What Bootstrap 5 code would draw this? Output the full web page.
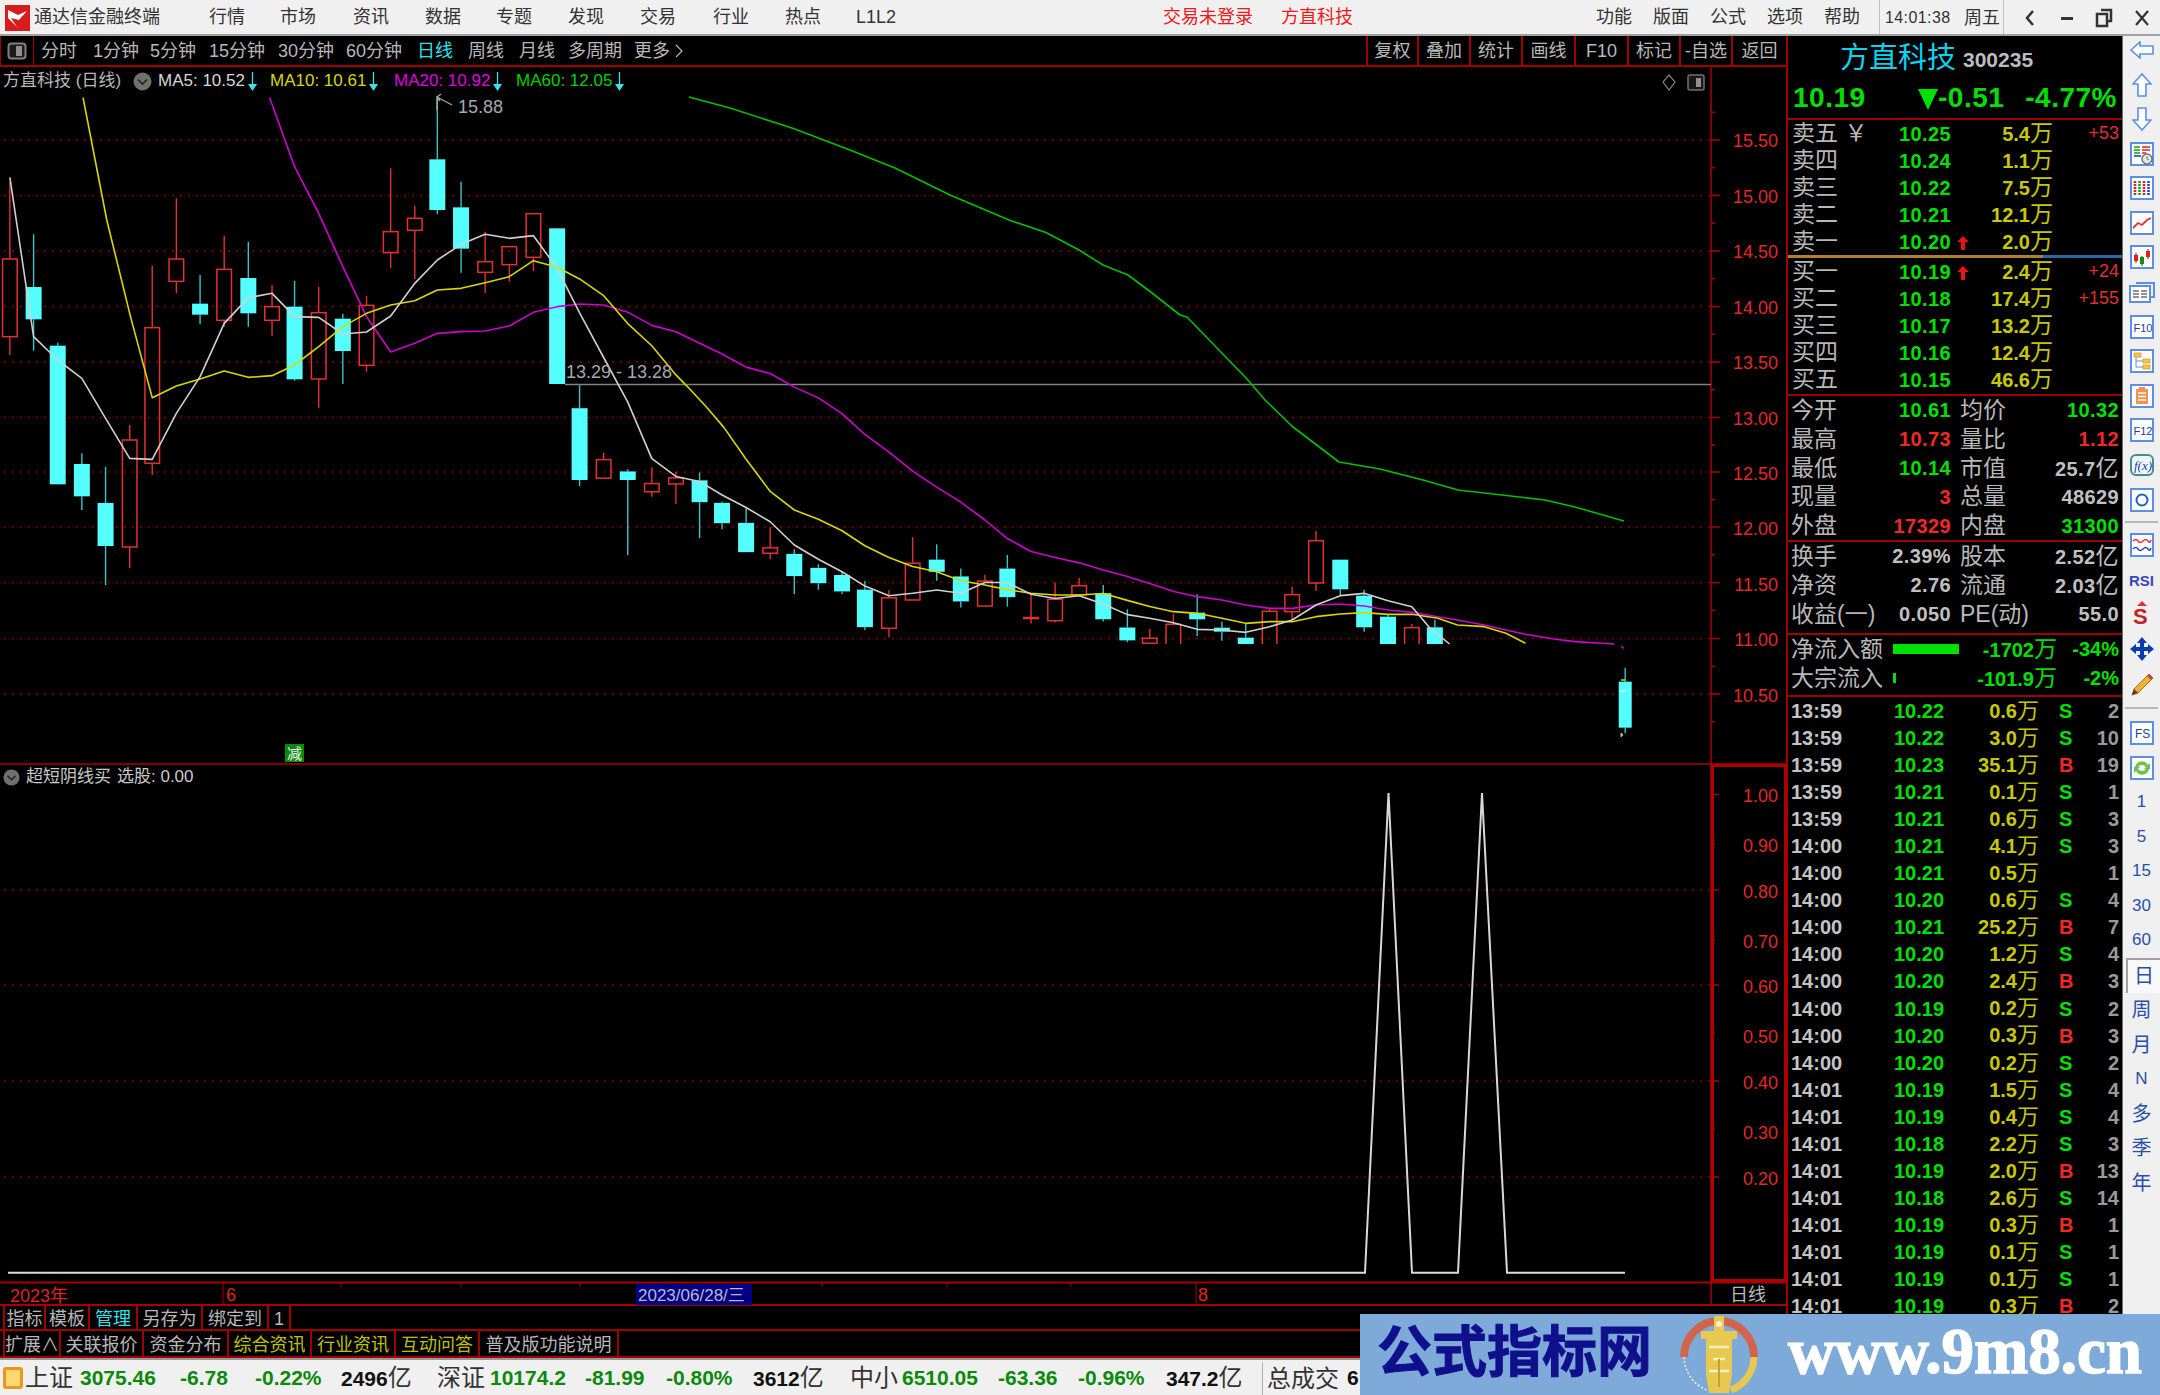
<!doctype html>
<html lang="zh">
<head>
<meta charset="utf-8">
<title>通达信金融终端</title>
<link href="https://cdn.jsdelivr.net/npm/bootstrap@5.3.0/dist/css/bootstrap.min.css" rel="stylesheet">
<style>
html,body{margin:0;background:#000;overflow:hidden}
body{width:2160px;height:1395px;font-family:"Liberation Sans","Noto Sans CJK SC",sans-serif;font-size:18px;line-height:1.1;color:#c0c0c0}
.shell{width:2160px;height:1395px}
i{font-style:normal}
/* title bar */
.titlebar{height:36px;background:#f0f0f0;border-bottom:2px solid #a0a0a0;color:#333;grid-template-columns:34px 175px 71px 73px 72px 71px 72px 72px 73px 72px 71px 307px 118px 315px 57px 57px 57px 57px 55px 85px 40px 7px 38px 36px 38px 37px;align-items:center;font-size:18px;white-space:nowrap}
.titlebar>div{padding-top:2px}
.titlebar .alert-red{color:#f01818}
.titlebar .timecell{border-left:1px solid #c0c0c0;height:34px;padding-left:5px;line-height:32px;font-size:16px;letter-spacing:.4px}
.titlebar .daycell{border-right:1px solid #c0c0c0;height:34px;line-height:32px}
.ctl{display:flex;justify-content:center}
/* toolbar */
.workspace{height:1322px}
.leftcol{width:1786px}
.toolbar{height:31px;border-bottom:2px solid #a00000;grid-template-columns:34px 59px 57px 59px 69px 68px 71px 51px 51px 49px 66px 60px 1fr 51px 52px 52px 53px 53px 52px 52px 55px;align-items:center;white-space:nowrap;color:#b8b8b8}
.toolbar>div{padding-top:2px}
.toolbar .iconcell{height:29px;padding-top:0;border-right:1px solid #a00000;border-left:1px solid #a00000;display:flex;align-items:center;justify-content:center}
.toolbar .first{padding-left:7px}
.toolbar .active-tab{color:#30e0e8}
.toolbar .rbtn{height:29px;padding-top:0;line-height:31px;border-left:2px solid #a00000;text-align:center}
.chartwrap{height:1239px}
.chartwrap svg{display:block}
.chead{left:3px;top:0;height:28px;grid-template-columns:130px 25px 112px 124px 122px 120px;align-items:center;font-size:17px;white-space:nowrap;color:#b8b8b8}
.chead .arrowed{display:flex;align-items:center;gap:3px}
.subhead{left:3px;top:698px;height:24px;font-size:17px;color:#c8c8c8;gap:6px}
.c-w{color:#d8d8d8}.c-y{color:#d8d800}.c-m{color:#e000e0}.c-g{color:#00d000}
.ax{fill:#e02828;font-size:18px;font-family:"Liberation Sans",sans-serif;transform:translateY(1px)}
.lab{fill:#a8a8a8;font-size:18px;font-family:"Liberation Sans",sans-serif}
.dt{font-size:18px;fill:#e02020;font-family:"Liberation Sans","Noto Sans CJK SC",sans-serif}
.tabsa,.tabsb{padding-left:3px;border-bottom:2px solid #a00000;align-items:stretch;white-space:nowrap}
.tabsa{height:25px;grid-template-columns:43px 44px 48px 65px 66px 22px 1fr}
.tabsb{height:27px;grid-template-columns:58px 83px 85px 83px 84px 84px 139px 1fr}
.tabcell{border-right:2px solid #a00000;text-align:center;color:#b8b8b8;font-size:18px;overflow:hidden}
.tabsa .tabcell{line-height:27px}
.tabsb .tabcell{line-height:29px}
.tabcell.none{border:0}
.tabsa .tabcell:first-child,.tabsb .tabcell:first-child{border-left:2px solid #a00000}
.t-cy{color:#30e0e8}.t-ye{color:#c0c000}
.tabsa .t-cy{color:#30e0e8}.tabsb .t-ye{color:#c0c000}
/* quote panel */
.panel{width:337px;border-left:2px solid #a00000;border-right:1px solid #707070;font-size:23px;white-space:nowrap;overflow:hidden}
.hline{height:2px;background:#a00000}
.hl-b{margin-top:1px}
.hl-c{margin-top:4px}
.hl-d{margin-top:2.5px}
.head-name{height:40px;padding-left:52px;padding-top:5px;gap:7px;align-items:center}
.head-name .nm1{font-size:29px;color:#08d4f0}
.head-name .nm2{font-size:21px;font-weight:700;color:#bcbcbc;padding-top:3px}
.head-price{height:42px;grid-template-columns:125px 20px 69px 1fr;padding:2px 5px 0;align-items:center;color:#00e000;font-weight:700;font-size:28px;letter-spacing:.5px}
.num{font-weight:700;font-size:20px;letter-spacing:.4px}
.gr{color:#00e000}.rd{color:#f02828}.gy{color:#c0c0c0}
.bk{height:135px}
.ask{height:27px;grid-template-columns:107px 58px 18px 78px 66px;align-items:center;padding-left:4px}
.lb{color:#b8b8b8;line-height:27px}
.vol{color:#c8c800;text-align:right;font-weight:700;font-size:20px}
.vol i{font-weight:400;font-size:23px}
.ex{color:#e03030;text-align:right;font-size:18px}
.split{height:3px}
.split span:first-child{width:255px;background:#b08030}
.split span:last-child{flex:1;background:#2868a8}
.st{height:28.8px;grid-template-columns:160px 159px;column-gap:9px;padding-left:3px;align-items:center}
.st2{height:29px}
.st>div{display:flex;justify-content:space-between;align-items:center;line-height:28px}
.st .y{font-weight:400;font-size:23px}
.fl{height:29px;grid-template-columns:102px 66px 98px 62px;align-items:center;padding-left:3px;font-size:23px}
.fl .bar{display:block;height:10px;background:#00e000}
.fl .bar.thin{width:3px}
.fl .vv{color:#00e000;text-align:right;font-weight:700;font-size:20px}
.fl .vv i{font-weight:400;font-size:23px}
.tk{height:27.05px;grid-template-columns:103px 66px 79px 41px 39px;padding-left:3px;align-items:center;font-weight:700;font-size:20px}
.tk .tm{color:#c4c4c4}
.tk .nn{color:#9a9a9a;text-align:right}
.tk .fg{padding-left:20px}
.tk .vol i{font-size:22px}
/* side bar */
.sidebar{width:37px;background:#f0f0f0;color:#2850a8;font-size:17px}
.sit{height:34.6px;display:flex;align-items:center;justify-content:center;flex:none}
.sit.top{margin-top:-3.4px}
.sit.cjk{font-size:20px}
.sit.sel{margin-left:3px;border-top:2px solid #a0a0a0;border-left:2px solid #a0a0a0;background:#f8f8f8}
.ssep{height:2px;background:#b8b8b8;margin:4.5px 2px;flex:none}
.ssep.wide{margin:6.5px 2px}
/* status */
.statusbar{height:37px;background:#f0f0f0;border-top:2px solid #9a9a9a;padding-top:1px;color:#222;grid-template-columns:25px 55px 100px 75px 86px 96px 53px 95px 81px 87px 97px 52px 96px 80px 88px 96px 85px 1fr;align-items:center;white-space:nowrap;font-size:21px}
.statusbar .lbl{font-size:24px;color:#333}
.statusbar .dn{color:#0a8a0a;font-weight:700}
.statusbar .am{color:#111;font-weight:700}
.statusbar .am i{font-size:24px;font-weight:400;color:#333}
.ssq{margin-left:3px;width:20px;height:22px;border-radius:3px;background:#ffd870;border:3px solid #e89820}
.statusbar .sepl{border-left:1px solid #b0b0b0;height:33px;line-height:33px;padding-left:4px}
/* watermark */
.wmark{left:1360px;top:1314px;width:800px;height:81px;background:#7eaad9;overflow:hidden}
.wm-cn{left:17px;top:2px;font-size:55px;font-weight:700;color:#10108c;line-height:72px;white-space:nowrap;-webkit-text-stroke:1px #10108c}
.wm-logo{left:319px;top:1px}
.wm-en{left:428px;top:4px;font-family:"Liberation Serif",serif;font-size:65px;font-weight:700;color:#fff;line-height:66px;white-space:nowrap;-webkit-text-stroke:1.5px #fff}
</style>
</head>
<body>
<div class="shell d-flex flex-column position-relative overflow-hidden">

  <!-- title bar -->
  <div class="titlebar d-grid">
    <div class="ps-1">
      <svg width="27" height="28" viewBox="0 0 27 28"><rect x="1" y="1" width="25" height="26" fill="#d81c1c"/><path d="M4 6 L14 11 L23 7 L15 16 L7 14 L13 23 L4 14Z" fill="#fff"/></svg>
    </div>
    <div>通达信金融终端</div>
    <div>行情</div><div>市场</div><div>资讯</div><div>数据</div><div>专题</div><div>发现</div><div>交易</div><div>行业</div><div>热点</div>
    <div>L1L2</div>
    <div class="alert-red">交易未登录</div>
    <div class="alert-red">方直科技</div>
    <div>功能</div><div>版面</div><div>公式</div><div>选项</div><div>帮助</div>
    <div class="timecell">14:01:38</div>
    <div class="daycell">周五</div>
    <div></div>
    <div class="ctl"><svg width="14" height="20" viewBox="0 0 14 20"><path d="M10 3 L4 10 L10 17" fill="none" stroke="#333" stroke-width="2.5"/></svg></div>
    <div class="ctl"><svg width="16" height="20" viewBox="0 0 16 20"><rect x="2" y="9" width="12" height="3" fill="#333"/></svg></div>
    <div class="ctl"><svg width="18" height="20" viewBox="0 0 18 20"><path d="M6 2h10v11h-3M2 6h10v12H2z" fill="none" stroke="#333" stroke-width="2.5"/></svg></div>
    <div class="ctl"><svg width="16" height="20" viewBox="0 0 16 20"><path d="M2 3 L14 17 M14 3 L2 17" stroke="#333" stroke-width="2.2"/></svg></div>
  </div>

  <div class="workspace d-flex">
    <div class="leftcol d-flex flex-column">
      <!-- toolbar -->
      <div class="toolbar d-grid">
        <div class="iconcell"><svg width="20" height="18" viewBox="0 0 20 18"><rect x="1.5" y="1.5" width="17" height="15" rx="3" fill="#1c1c1c" stroke="#808080" stroke-width="2"/><rect x="9" y="4" width="6" height="10" fill="#909090"/></svg></div>
        <div class="first">分时</div><div>1分钟</div><div>5分钟</div><div>15分钟</div><div>30分钟</div><div>60分钟</div>
        <div class="active-tab">日线</div><div>周线</div><div>月线</div><div>多周期</div>
        <div class="d-flex align-items-center gap-1">更多<svg width="10" height="18" viewBox="0 0 10 18"><path d="M2 3 L8 9 L2 15" fill="none" stroke="#b8b8b8" stroke-width="1.2"/></svg></div>
        <div></div>
        <div class="rbtn">复权</div><div class="rbtn">叠加</div><div class="rbtn">统计</div><div class="rbtn">画线</div><div class="rbtn">F10</div><div class="rbtn">标记</div><div class="rbtn">-自选</div><div class="rbtn">返回</div>
      </div>

      <!-- chart canvas -->
      <div class="chartwrap position-relative">
        <svg id="chart" width="1786" height="1239" viewBox="0 67 1786 1239">
          <defs><clipPath id="cut"><rect x="0" y="67" width="1700" height="577"/></clipPath></defs>
          <g id="grid"></g>
          <g id="axes">
            <text class="ax" x="1778" y="146" text-anchor="end">15.50</text>
            <text class="ax" x="1778" y="202" text-anchor="end">15.00</text>
            <text class="ax" x="1778" y="257" text-anchor="end">14.50</text>
            <text class="ax" x="1778" y="313" text-anchor="end">14.00</text>
            <text class="ax" x="1778" y="368" text-anchor="end">13.50</text>
            <text class="ax" x="1778" y="424" text-anchor="end">13.00</text>
            <text class="ax" x="1778" y="479" text-anchor="end">12.50</text>
            <text class="ax" x="1778" y="534" text-anchor="end">12.00</text>
            <text class="ax" x="1778" y="590" text-anchor="end">11.50</text>
            <text class="ax" x="1778" y="645" text-anchor="end">11.00</text>
            <text class="ax" x="1778" y="701" text-anchor="end">10.50</text>
            <text class="ax" x="1778" y="801" text-anchor="end">1.00</text>
            <text class="ax" x="1778" y="851" text-anchor="end">0.90</text>
            <text class="ax" x="1778" y="897" text-anchor="end">0.80</text>
            <text class="ax" x="1778" y="947" text-anchor="end">0.70</text>
            <text class="ax" x="1778" y="992" text-anchor="end">0.60</text>
            <text class="ax" x="1778" y="1042" text-anchor="end">0.50</text>
            <text class="ax" x="1778" y="1088" text-anchor="end">0.40</text>
            <text class="ax" x="1778" y="1138" text-anchor="end">0.30</text>
            <text class="ax" x="1778" y="1184" text-anchor="end">0.20</text>
          </g>
          <line x1="565" y1="384.6" x2="1711" y2="384.6" stroke="#808080" stroke-width="1.5"/>
          <g id="candles" clip-path="url(#cut)"></g>
          <g id="lines"></g>
          <g id="rest"></g>
          <!-- high and range labels -->
          <path d="M437 110 V97 L452 105 M437 97 L441 94 M437 97 L440 101" fill="none" stroke="#a8a8a8" stroke-width="1.3"/>
          <text class="lab" x="458" y="113">15.88</text>
          <text class="lab" x="566" y="378">13.29 - 13.28</text>
          <rect x="285" y="744" width="19" height="18" fill="#0a8a0a"/>
          <text x="287" y="759" font-size="15" fill="#f0f0f0" font-family="Noto Sans CJK SC">减</text>
          <polygon points="1669,75 1675,82 1669,90 1663,82" fill="none" stroke="#808080" stroke-width="1.2"/>
          <rect x="1688" y="75" width="16" height="15" rx="2" fill="#181818" stroke="#707070" stroke-width="1.5"/>
          <rect x="1696" y="78" width="5" height="9" fill="#909090"/>
          <!-- date row -->
          <text class="dt" x="10" y="1302">2023年</text>
          <text class="dt" x="226" y="1301">6</text>
          <rect x="636" y="1284" width="116" height="21" fill="#000080"/>
          <text x="638" y="1301" font-size="17" fill="#b8b8d8" font-family="Liberation Sans,Noto Sans CJK SC">2023/06/28/三</text>
          <text class="dt" x="1198" y="1301">8</text>
          <text x="1730" y="1301" font-size="18" fill="#b8b8b8" font-family="Noto Sans CJK SC">日线</text>
        </svg>

        <div class="chead position-absolute d-grid">
          <div>方直科技 (日线)</div>
          <div><svg width="19" height="19" viewBox="0 0 19 19"><circle cx="9.5" cy="9.5" r="9" fill="#707070"/><path d="M5 7.5 L9.5 12 L14 7.5" fill="none" stroke="#222" stroke-width="1.6"/></svg></div>
          <div class="arrowed c-w">MA5: 10.52<svg width="9" height="20" viewBox="0 0 9 20"><path d="M4.5 1V13" stroke="#40e0e8" stroke-width="1.3"/><path d="M0 13H9L4.5 20Z" fill="#40e0e8"/></svg></div>
          <div class="arrowed c-y">MA10: 10.61<svg width="9" height="20" viewBox="0 0 9 20"><path d="M4.5 1V13" stroke="#40e0e8" stroke-width="1.3"/><path d="M0 13H9L4.5 20Z" fill="#40e0e8"/></svg></div>
          <div class="arrowed c-m">MA20: 10.92<svg width="9" height="20" viewBox="0 0 9 20"><path d="M4.5 1V13" stroke="#40e0e8" stroke-width="1.3"/><path d="M0 13H9L4.5 20Z" fill="#40e0e8"/></svg></div>
          <div class="arrowed c-g">MA60: 12.05<svg width="9" height="20" viewBox="0 0 9 20"><path d="M4.5 1V13" stroke="#40e0e8" stroke-width="1.3"/><path d="M0 13H9L4.5 20Z" fill="#40e0e8"/></svg></div>
        </div>
        <div class="subhead position-absolute d-flex align-items-center">
          <svg width="17" height="17" viewBox="0 0 19 19"><circle cx="9.5" cy="9.5" r="9" fill="#707070"/><path d="M5 7.5 L9.5 12 L14 7.5" fill="none" stroke="#222" stroke-width="1.6"/></svg>
          <span>超短阴线买</span><span>选股: 0.00</span>
        </div>
      </div>

      <!-- bottom tab rows -->
      <div class="tabsa d-grid">
        <div class="tabcell">指标</div><div class="tabcell">模板</div><div class="tabcell t-cy">管理</div><div class="tabcell">另存为</div><div class="tabcell">绑定到</div><div class="tabcell">1</div><div class="tabcell none"></div>
      </div>
      <div class="tabsb d-grid">
        <div class="tabcell">扩展∧</div><div class="tabcell">关联报价</div><div class="tabcell">资金分布</div><div class="tabcell t-ye">综合资讯</div><div class="tabcell t-ye">行业资讯</div><div class="tabcell t-ye">互动问答</div><div class="tabcell">普及版功能说明</div><div class="tabcell none"></div>
      </div>
    </div>

    <!-- quote panel -->
    <div class="panel">
      <div class="head-name d-flex"><span class="nm1">方直科技</span><span class="nm2">300235</span></div>
      <div class="head-price d-grid">
        <div>10.19</div>
        <div><svg width="20" height="21" viewBox="0 0 20 21"><path d="M0 0H20L10 21Z" fill="#00e000"/></svg></div>
        <div>-0.51</div>
        <div class="text-end">-4.77%</div>
      </div>
      <div class="hline"></div>

      <div class="bk">
        <div class="ask d-grid"><span class="lb">卖五 ￥</span><span class="num gr">10.25</span><span></span><span class="vol">5.4<i>万</i></span><span class="ex">+53</span></div>
        <div class="ask d-grid"><span class="lb">卖四</span><span class="num gr">10.24</span><span></span><span class="vol">1.1<i>万</i></span><span class="ex"></span></div>
        <div class="ask d-grid"><span class="lb">卖三</span><span class="num gr">10.22</span><span></span><span class="vol">7.5<i>万</i></span><span class="ex"></span></div>
        <div class="ask d-grid"><span class="lb">卖二</span><span class="num gr">10.21</span><span></span><span class="vol">12.1<i>万</i></span><span class="ex"></span></div>
        <div class="ask d-grid"><span class="lb">卖一</span><span class="num gr">10.20</span><span><svg width="12" height="14" viewBox="0 0 12 14"><path d="M6 0 L12 6 H8 V14 H4 V6 H0Z" fill="#f01010"/></svg></span><span class="vol">2.0<i>万</i></span><span class="ex"></span></div>
      </div>
      <div class="split d-flex"><span></span><span></span></div>
      <div class="bk">
        <div class="ask d-grid"><span class="lb">买一</span><span class="num gr">10.19</span><span><svg width="12" height="14" viewBox="0 0 12 14"><path d="M6 0 L12 6 H8 V14 H4 V6 H0Z" fill="#f01010"/></svg></span><span class="vol">2.4<i>万</i></span><span class="ex">+24</span></div>
        <div class="ask d-grid"><span class="lb">买二</span><span class="num gr">10.18</span><span></span><span class="vol">17.4<i>万</i></span><span class="ex">+155</span></div>
        <div class="ask d-grid"><span class="lb">买三</span><span class="num gr">10.17</span><span></span><span class="vol">13.2<i>万</i></span><span class="ex"></span></div>
        <div class="ask d-grid"><span class="lb">买四</span><span class="num gr">10.16</span><span></span><span class="vol">12.4<i>万</i></span><span class="ex"></span></div>
        <div class="ask d-grid"><span class="lb">买五</span><span class="num gr">10.15</span><span></span><span class="vol">46.6<i>万</i></span><span class="ex"></span></div>
      </div>
      <div class="hline hl-b"></div>

      <div class="st d-grid"><div><span class="lb">今开</span><span class="num gr">10.61</span></div><div><span class="lb">均价</span><span class="num gr">10.32</span></div></div>
      <div class="st d-grid"><div><span class="lb">最高</span><span class="num rd">10.73</span></div><div><span class="lb">量比</span><span class="num rd">1.12</span></div></div>
      <div class="st d-grid"><div><span class="lb">最低</span><span class="num gr">10.14</span></div><div><span class="lb">市值</span><span class="num gy">25.7<i class="y">亿</i></span></div></div>
      <div class="st d-grid"><div><span class="lb">现量</span><span class="num rd">3</span></div><div><span class="lb">总量</span><span class="num gy">48629</span></div></div>
      <div class="st d-grid"><div><span class="lb">外盘</span><span class="num rd">17329</span></div><div><span class="lb">内盘</span><span class="num gr">31300</span></div></div>
      <div class="hline"></div>

      <div class="st st2 d-grid"><div><span class="lb">换手</span><span class="num gy">2.39%</span></div><div><span class="lb">股本</span><span class="num gy">2.52<i class="y">亿</i></span></div></div>
      <div class="st st2 d-grid"><div><span class="lb">净资</span><span class="num gy">2.76</span></div><div><span class="lb">流通</span><span class="num gy">2.03<i class="y">亿</i></span></div></div>
      <div class="st st2 d-grid"><div><span class="lb">收益(一)</span><span class="num gy">0.050</span></div><div><span class="lb">PE(动)</span><span class="num gy">55.0</span></div></div>
      <div class="hline hl-c"></div>

      <div class="fl d-grid"><span class="lb">净流入额</span><span><span class="bar"></span></span><span class="vv">-1702<i>万</i></span><span class="vv">-34%</span></div>
      <div class="fl d-grid"><span class="lb">大宗流入</span><span><span class="bar thin"></span></span><span class="vv">-101.9<i>万</i></span><span class="vv">-2%</span></div>
      <div class="hline hl-d"></div>

      <div class="tk d-grid"><span class="tm">13:59</span><span class="gr">10.22</span><span class="vol">0.6<i>万</i></span><span class="fg gr">S</span><span class="nn">2</span></div>
      <div class="tk d-grid"><span class="tm">13:59</span><span class="gr">10.22</span><span class="vol">3.0<i>万</i></span><span class="fg gr">S</span><span class="nn">10</span></div>
      <div class="tk d-grid"><span class="tm">13:59</span><span class="gr">10.23</span><span class="vol">35.1<i>万</i></span><span class="fg rd">B</span><span class="nn">19</span></div>
      <div class="tk d-grid"><span class="tm">13:59</span><span class="gr">10.21</span><span class="vol">0.1<i>万</i></span><span class="fg gr">S</span><span class="nn">1</span></div>
      <div class="tk d-grid"><span class="tm">13:59</span><span class="gr">10.21</span><span class="vol">0.6<i>万</i></span><span class="fg gr">S</span><span class="nn">3</span></div>
      <div class="tk d-grid"><span class="tm">14:00</span><span class="gr">10.21</span><span class="vol">4.1<i>万</i></span><span class="fg gr">S</span><span class="nn">3</span></div>
      <div class="tk d-grid"><span class="tm">14:00</span><span class="gr">10.21</span><span class="vol">0.5<i>万</i></span><span class="fg"></span><span class="nn">1</span></div>
      <div class="tk d-grid"><span class="tm">14:00</span><span class="gr">10.20</span><span class="vol">0.6<i>万</i></span><span class="fg gr">S</span><span class="nn">4</span></div>
      <div class="tk d-grid"><span class="tm">14:00</span><span class="gr">10.21</span><span class="vol">25.2<i>万</i></span><span class="fg rd">B</span><span class="nn">7</span></div>
      <div class="tk d-grid"><span class="tm">14:00</span><span class="gr">10.20</span><span class="vol">1.2<i>万</i></span><span class="fg gr">S</span><span class="nn">4</span></div>
      <div class="tk d-grid"><span class="tm">14:00</span><span class="gr">10.20</span><span class="vol">2.4<i>万</i></span><span class="fg rd">B</span><span class="nn">3</span></div>
      <div class="tk d-grid"><span class="tm">14:00</span><span class="gr">10.19</span><span class="vol">0.2<i>万</i></span><span class="fg gr">S</span><span class="nn">2</span></div>
      <div class="tk d-grid"><span class="tm">14:00</span><span class="gr">10.20</span><span class="vol">0.3<i>万</i></span><span class="fg rd">B</span><span class="nn">3</span></div>
      <div class="tk d-grid"><span class="tm">14:00</span><span class="gr">10.20</span><span class="vol">0.2<i>万</i></span><span class="fg gr">S</span><span class="nn">2</span></div>
      <div class="tk d-grid"><span class="tm">14:01</span><span class="gr">10.19</span><span class="vol">1.5<i>万</i></span><span class="fg gr">S</span><span class="nn">4</span></div>
      <div class="tk d-grid"><span class="tm">14:01</span><span class="gr">10.19</span><span class="vol">0.4<i>万</i></span><span class="fg gr">S</span><span class="nn">4</span></div>
      <div class="tk d-grid"><span class="tm">14:01</span><span class="gr">10.18</span><span class="vol">2.2<i>万</i></span><span class="fg gr">S</span><span class="nn">3</span></div>
      <div class="tk d-grid"><span class="tm">14:01</span><span class="gr">10.19</span><span class="vol">2.0<i>万</i></span><span class="fg rd">B</span><span class="nn">13</span></div>
      <div class="tk d-grid"><span class="tm">14:01</span><span class="gr">10.18</span><span class="vol">2.6<i>万</i></span><span class="fg gr">S</span><span class="nn">14</span></div>
      <div class="tk d-grid"><span class="tm">14:01</span><span class="gr">10.19</span><span class="vol">0.3<i>万</i></span><span class="fg rd">B</span><span class="nn">1</span></div>
      <div class="tk d-grid"><span class="tm">14:01</span><span class="gr">10.19</span><span class="vol">0.1<i>万</i></span><span class="fg gr">S</span><span class="nn">1</span></div>
      <div class="tk d-grid"><span class="tm">14:01</span><span class="gr">10.19</span><span class="vol">0.1<i>万</i></span><span class="fg gr">S</span><span class="nn">1</span></div>
      <div class="tk d-grid"><span class="tm">14:01</span><span class="gr">10.19</span><span class="vol">0.3<i>万</i></span><span class="fg rd">B</span><span class="nn">2</span></div>
    </div>

    <!-- icon sidebar -->
    <div class="sidebar d-flex flex-column">
      <div class="sit top"><svg width="24" height="18" viewBox="0 0 24 18"><path d="M1 9 L10 1 V5 H23 V13 H10 V17Z" fill="#fff" stroke="#5a90e8" stroke-width="1.6"/></svg></div>
      <div class="sit"><svg width="20" height="24" viewBox="0 0 20 24"><path d="M10 1 L19 11 H14 V23 H6 V11 H1Z" fill="#fff" stroke="#5a90e8" stroke-width="1.6"/></svg></div>
      <div class="sit"><svg width="20" height="24" viewBox="0 0 20 24"><path d="M10 23 L19 13 H14 V1 H6 V13 H1Z" fill="#fff" stroke="#5a90e8" stroke-width="1.6"/></svg></div>
      <div class="sit"><svg width="24" height="24" viewBox="0 0 24 24"><rect x="1" y="1" width="22" height="22" fill="#fff" stroke="#5a90e8" stroke-width="2"/><path d="M4 5h6M4 8h6M4 11h6" stroke="#10a010" stroke-width="1.6"/><path d="M12 5h8M12 8h8M12 11h4" stroke="#e02020" stroke-width="1.6"/><path d="M4 14h7" stroke="#2040c0" stroke-width="1.6"/><circle cx="17" cy="17" r="5" fill="#e8e8e8" stroke="#707070" stroke-width="1.5"/><path d="M17 14v3l2 1" stroke="#707070" fill="none"/></svg></div>
      <div class="sit"><svg width="24" height="24" viewBox="0 0 24 24"><rect x="1" y="1" width="22" height="22" fill="#fff" stroke="#5a90e8" stroke-width="2"/><path d="M5 5v14" stroke="#e02020" stroke-width="2.6" stroke-dasharray="2 1"/><path d="M9.5 5v14" stroke="#10a010" stroke-width="2.6" stroke-dasharray="2 1"/><path d="M14 5v14" stroke="#e02020" stroke-width="2.6" stroke-dasharray="2 1"/><path d="M18.5 5v14" stroke="#2040d0" stroke-width="2.6" stroke-dasharray="2 1"/></svg></div>
      <div class="sit"><svg width="24" height="24" viewBox="0 0 24 24"><rect x="1" y="1" width="22" height="22" fill="#fff" stroke="#5a90e8" stroke-width="2"/><path d="M3 17 L8 12 L12 14 L17 9 L21 7" fill="none" stroke="#e83030" stroke-width="1.8"/></svg></div>
      <div class="sit"><svg width="24" height="24" viewBox="0 0 24 24"><rect x="1" y="1" width="22" height="22" fill="#fff" stroke="#5a90e8" stroke-width="2"/><path d="M6 8v10M12 11v10M18 4v10" stroke="#333" stroke-width="1"/><rect x="4" y="10" width="4" height="6" fill="#e02020"/><rect x="10" y="12" width="4" height="7" fill="#109010"/><rect x="16" y="6" width="4" height="6" fill="#e02020"/></svg></div>
      <div class="sit"><svg width="26" height="24" viewBox="0 0 26 24"><path d="M7 3H25V17H21" fill="none" stroke="#5a90e8" stroke-width="2"/><rect x="1" y="6" width="20" height="16" fill="#fff" stroke="#5a90e8" stroke-width="2"/><path d="M4 11h6M12 11h6M4 14h6M12 14h6M4 17h6M12 17h6" stroke="#707070" stroke-width="1.5"/></svg></div>
      <div class="sit"><svg width="24" height="24" viewBox="0 0 24 24"><rect x="1" y="1" width="22" height="22" fill="#fff" stroke="#5a90e8" stroke-width="2"/><text x="3.5" y="16.5" font-size="11" fill="#2040a0" font-family="Liberation Sans">F10</text></svg></div>
      <div class="sit"><svg width="24" height="24" viewBox="0 0 24 24"><rect x="1" y="1" width="22" height="22" fill="#fff" stroke="#5a90e8" stroke-width="2"/><path d="M6 7V18H13M6 12H13" fill="none" stroke="#5a90e8"/><rect x="4" y="4" width="7" height="4" fill="#f8c840" stroke="#d09020" stroke-width=".7"/><rect x="13" y="10" width="7" height="4" fill="#f8c840" stroke="#d09020" stroke-width=".7"/><rect x="13" y="16" width="7" height="4" fill="#f8c840" stroke="#d09020" stroke-width=".7"/></svg></div>
      <div class="sit"><svg width="24" height="24" viewBox="0 0 24 24"><rect x="1" y="1" width="22" height="22" fill="#fff" stroke="#5a90e8" stroke-width="2"/><rect x="6" y="5" width="12" height="15" fill="#f89050"/><path d="M9 5V3h6v2" fill="#f89050"/><path d="M8 9h8M8 12.5h8M8 16h8" stroke="#fff" stroke-width="1.5"/></svg></div>
      <div class="sit"><svg width="24" height="24" viewBox="0 0 24 24"><rect x="1" y="1" width="22" height="22" fill="#fff" stroke="#5a90e8" stroke-width="2"/><text x="3.5" y="16.5" font-size="11" fill="#2040a0" font-family="Liberation Sans">F12</text></svg></div>
      <div class="sit"><svg width="24" height="24" viewBox="0 0 24 24"><rect x="1" y="2" width="22" height="20" rx="5" fill="#eef8f8" stroke="#409090" stroke-width="2"/><text x="4" y="17" font-size="13" font-style="italic" fill="#2040a0" font-family="Liberation Serif">f(x)</text></svg></div>
      <div class="sit"><svg width="24" height="24" viewBox="0 0 24 24"><rect x="1" y="1" width="22" height="22" fill="#fff" stroke="#5a90e8" stroke-width="2"/><circle cx="12" cy="12" r="5.5" fill="none" stroke="#2060c0" stroke-width="2"/></svg></div>
      <div class="ssep"></div>
      <div class="sit"><svg width="24" height="24" viewBox="0 0 24 24"><rect x="1" y="1" width="22" height="22" fill="#fff" stroke="#5a90e8" stroke-width="2"/><path d="M3 8 Q6 5 8 8 T13 8 T18 8 T21 7" fill="none" stroke="#e03030" stroke-width="1.4"/><path d="M3 16 Q6 13 8 16 T13 16 T18 16 T21 15" fill="none" stroke="#3040d0" stroke-width="1.4"/></svg></div>
      <div class="sit"><svg width="28" height="20" viewBox="0 0 28 20"><text x="1" y="16" font-size="15" font-weight="700" fill="#3848b8" font-family="Liberation Sans">RSI</text></svg></div>
      <div class="sit"><svg width="22" height="28" viewBox="0 0 22 28"><path d="M11 1 L16 6 H6Z" fill="#e03030"/><text x="2" y="24" font-size="22" font-weight="700" fill="#c82020" font-family="Liberation Sans">S</text></svg></div>
      <div class="sit"><svg width="26" height="26" viewBox="0 0 26 26"><path d="M13 1 L18 7 H15 V11 H19 V8 L25 13 L19 18 V15 H15 V19 H18 L13 25 L8 19 H11 V15 H7 V18 L1 13 L7 8 V11 H11 V7 H8Z" fill="#0a3ab0"/></svg></div>
      <div class="sit"><svg width="24" height="24" viewBox="0 0 24 24"><path d="M19 2 L23 6 L8 21 L2 23 L4 17Z" fill="#f0b030" stroke="#a07020" stroke-width="1"/><path d="M2 23 L4 17 L8 21Z" fill="#604020"/><path d="M19 2 L23 6 L21 8 L17 4Z" fill="#d04030"/></svg></div>
      <div class="ssep wide"></div>
      <div class="sit"><svg width="24" height="24" viewBox="0 0 24 24"><rect x="1" y="1" width="22" height="22" fill="#fff" stroke="#5a90e8" stroke-width="2"/><text x="5" y="16.5" font-size="12" fill="#2040a0" font-family="Liberation Sans">FS</text></svg></div>
      <div class="sit"><svg width="24" height="24" viewBox="0 0 24 24"><rect x="1" y="1" width="22" height="22" fill="#fff" stroke="#5a90e8" stroke-width="2"/><path d="M5 11 A7 7 0 0 1 18 9 L20 7 V13 H14 L16 11 A5 5 0 0 0 8 11Z M19 13 A7 7 0 0 1 6 15 L4 17 V11 H10 L8 13 A5 5 0 0 0 16 13Z" fill="#70c050"/></svg></div>
      <div class="sit">1</div><div class="sit">5</div><div class="sit">15</div><div class="sit">30</div><div class="sit">60</div>
      <div class="sit cjk sel">日</div><div class="sit cjk">周</div><div class="sit cjk">月</div><div class="sit">N</div><div class="sit cjk">多</div><div class="sit cjk">季</div><div class="sit cjk">年</div>
    </div>
  </div>

  <!-- status bar -->
  <div class="statusbar d-grid">
    <div><div class="ssq"></div></div>
    <div class="lbl">上证</div><div class="dn">3075.46</div><div class="dn">-6.78</div><div class="dn">-0.22%</div><div class="am">2496<i>亿</i></div>
    <div class="lbl">深证</div><div class="dn">10174.2</div><div class="dn">-81.99</div><div class="dn">-0.80%</div><div class="am">3612<i>亿</i></div>
    <div class="lbl">中小</div><div class="dn">6510.05</div><div class="dn">-63.36</div><div class="dn">-0.96%</div><div class="am">347.2<i>亿</i></div>
    <div class="lbl sepl">总成交</div><div class="am">6</div>
  </div>

  <!-- site watermark -->
  <div class="wmark position-absolute">
    <div class="wm-cn position-absolute">公式指标网</div>
    <svg class="wm-logo position-absolute" width="80" height="80" viewBox="0 0 80 80">
      <path d="M5 42 A35 36 0 0 1 75 42" fill="none" stroke="#d0644c" stroke-width="8"/>
      <path d="M75 42 A35 36 0 0 1 52 75" fill="none" stroke="#e8c850" stroke-width="7"/>
      <path d="M5 42 A35 36 0 0 0 28 75" fill="none" stroke="#e8f0f8" stroke-width="1.5" stroke-dasharray="2 2"/>
      <path d="M35 1 H45 V16 H58 V24 H53 V60 L50 78 H30 L27 60 V24 H22 V16 H35Z" fill="#e8c850"/>
      <circle cx="40" cy="9" r="3" fill="#f4f0d8"/>
      <path d="M30 32H50M34 44H46M30 56H50" stroke="#f8f0c0" stroke-width="2.5"/>
      <path d="M40 44V72" stroke="#c8a030" stroke-width="2"/>
    </svg>
    <div class="wm-en position-absolute">www.9m8.cn</div>
  </div>
</div>

<script src="https://cdn.jsdelivr.net/npm/bootstrap@5.3.0/dist/js/bootstrap.bundle.min.js"></script>
<script>
// Price data read from the picture; each point is given in one of three sampling frames.
const z8=(x,y)=>[x/2.529,y/3+60], z9=(x,y)=>[x/2.45+540,y/2.8+220], z10=(x,y)=>[x/2.306+1120,y/3+400];
const CY='#54ffff', WK='#38c4c8', RD='#e43030';
// [cx, high, low, bodyTop, bodyBottom, type]
const d8=[[25,365,885,597,830,'r'],[85,523,872,681,778,'c'],[146,848,1273,857,1273,'c'],[207,1180,1350,1212,1309,'c'],[267,1220,1575,1329,1458,'c'],[328,1095,1525,1140,1461,'r'],[385,617,1245,803,1210,'r'],[446,415,700,597,664,'r'],[506,645,792,731,764,'c'],[567,527,800,628,781,'r'],[628,545,800,654,760,'c'],[688,675,827,740,781,'r'],[745,662,962,740,958,'c'],[806,680,1043,758,957,'r'],[867,761,972,776,873,'c'],[927,707,935,736,916,'r'],[988,325,625,515,578,'r'],[1049,437,657,475,511,'r'],[1106,110,463,298,450,'c'],[1166,365,638,442,566,'c'],[1227,515,700,605,637,'r'],[1288,560,665,560,614,'r'],[1349,460,633,461,592,'r'],[1409,505,972,505,972,'c']];
const d9=[[97,463,745,527,728,'c'],[156,652,723,671,723,'r'],[215,698,938,704,728,'c'],[274,692,775,738,761,'r'],[333,705,795,722,739,'r'],[391,707,891,729,790,'c'],[446,788,866,792,849,'c'],[505,805,930,848,930,'c'],[564,860,950,918,933,'r'],[623,922,1047,935,997,'c'],[682,964,1035,974,1017,'c'],[740,985,1047,994,1040,'c'],[796,1010,1148,1035,1140,'c'],[855,1036,1168,1058,1143,'r'],[913,888,1064,961,1064,'r'],[972,908,1010,951,985,'c'],[1031,976,1085,998,1068,'c'],[1090,993,1081,1011,1081,'r'],[1145,938,1082,976,1056,'c'],[1203,1045,1130,1113,1116,'r'],[1262,1015,1127,1062,1122,'r'],[1321,1002,1050,1024,1050,'r'],[1380,1022,1124,1045,1118,'c'],[1439,1090,1182,1141,1177,'c'],[1494,1145,1185,1171,1185,'r']];
const d10=[[123,642,740,673,740,'r'],[178,583,708,638,658,'c'],[235,665,722,683,695,'c'],[290,672,740,713,740,'c'],[345,625,740,634,740,'r'],[397,560,660,584,635,'r'],[452,393,573,422,549,'r'],[508,479,587,479,568,'c'],[563,570,695,587,682,'c'],[618,645,740,650,740,'c'],[673,672,740,683,740,'r'],[726,660,740,682,740,'c']];
function candle(f,c,w){
  const [x,hi]=f(c[0],c[1]),lo=f(c[0],c[2])[1],t=f(c[0],c[3])[1],b=f(c[0],c[4])[1];
  const col=c[5]=='r'?RD:CY, wick=c[5]=='r'?RD:WK;
  let s=`<path d="M${x} ${hi}V${t}M${x} ${b}V${lo}" stroke="${wick}" stroke-width="1.4"/>`;
  if(c[5]=='c') s+=`<rect x="${x-w/2}" y="${t}" width="${w}" height="${b-t}" fill="${col}"/>`;
  else s+=`<rect x="${x-w/2+.7}" y="${t}" width="${w-1.4}" height="${Math.max(b-t,1)}" fill="none" stroke="${col}" stroke-width="1.5"/>`;
  return s;
}
let cs='';
d8.forEach(c=>cs+=candle(z8,c,16));d9.forEach(c=>cs+=candle(z9,c,16));d10.forEach(c=>cs+=candle(z10,c,16));
document.getElementById('candles').innerHTML=cs;

const poly=(pts,col,w)=>`<polyline points="${pts.map(p=>p.join(',')).join(' ')}" fill="none" stroke="${col}" stroke-width="${w}" stroke-linejoin="round"/>`;
const mp=(f,a)=>a.map(p=>f(p[0],p[1]));
const ma60=[[689,97],[730,108],[792,128],[850,150],[895,168],[950,195],[1009,220],[1046,232.5],[1079,250],[1103,265],[1128,275],[1152,293],[1180,315],[1187,317],[1247,379],[1265,400],[1293,427],[1339,462],[1380,469],[1423,480],[1458,490],[1493,494],[1545,500],[1575,507],[1624,521]];
const ma20=mp(z8,[[682,113],[745,320],[806,460],[867,620],[927,770],[988,876],[1049,850],[1106,820],[1166,815],[1227,813],[1288,798],[1349,757],[1409,740]]).concat(mp(z9,[[97,235],[156,238],[215,258],[274,295],[333,313],[391,345],[446,375],[505,412],[564,430],[623,468],[682,498],[740,542],[796,600],[855,650],[913,703],[972,748],[1031,790],[1090,840],[1145,892],[1203,928],[1262,945],[1321,960],[1380,980],[1439,998],[1494,1018],[1553,1040]]),mp(z10,[[178,590],[235,600],[290,615],[345,625],[397,625],[452,615],[508,612],[563,618],[618,630],[673,637],[733,650],[778,660],[840,675],[890,690],[935,703],[1000,717],[1050,725],[1140,732]]));
const ma10=mp(z8,[[210,113],[270,480],[330,770],[385,1013],[446,978],[506,957],[567,933],[628,952],[688,947],[745,915],[806,860],[867,800],[927,760],[988,735],[1049,722],[1106,690],[1166,685],[1227,668],[1288,650],[1349,602],[1409,622]]).concat(mp(z9,[[97,165],[156,212],[215,290],[274,352],[330,430],[360,465],[405,520],[450,580],[505,670],[564,760],[623,812],[682,838],[740,870],[796,912],[855,945],[913,970],[972,985],[1031,1010],[1090,1022],[1145,1035],[1203,1045],[1262,1050],[1321,1050],[1380,1046],[1439,1065],[1494,1082]]),mp(z10,[[123,635],[178,640],[235,655],[290,670],[345,665],[397,665],[452,650],[508,642],[563,638],[618,643],[673,643],[733,655],[778,675],[840,680],[890,700],[935,730]]));
const ma5=mp(z8,[[25,352],[85,830],[146,900],[207,955],[267,1075],[328,1195],[385,1198],[446,1060],[506,950],[567,790],[628,713],[688,700],[745,770],[806,772],[867,822],[927,816],[988,768],[1049,670],[1106,600],[1166,553],[1227,523],[1288,535],[1349,527],[1409,625]]).concat(mp(z9,[[97,260],[156,385],[215,510],[274,668],[333,718],[391,732],[446,770],[505,805],[564,845],[623,910],[682,950],[740,985],[796,1025],[855,1052],[913,1045],[972,1036],[1031,1045],[1090,1015],[1145,1015],[1203,1048],[1262,1060],[1321,1052],[1380,1075],[1439,1105],[1494,1115]]),mp(z10,[[123,668],[178,688],[235,690],[290,697],[345,680],[397,660],[452,615],[508,587],[563,580],[618,602],[673,620],[713,682],[760,732]]));
document.getElementById('lines').innerHTML=poly(ma60,'#00c000',1.6)+poly(ma20,'#d000d0',1.6)+poly(ma10,'#d8d800',1.6)+poly(ma5,'#d0d0d0',1.6);

// grid, axes, last candle, indicator
let g='';
const DOT='#8c0000', LN='#a80000';
[140,195.5,251,306.5,362,417.5,472,527,582.5,638.5,694].forEach(y=>{
  g+=`<line x1="4" x2="1710" y1="${y}" y2="${y}" stroke="${DOT}" stroke-width="1.5" stroke-dasharray="2 6"/>`;
  g+=`<line x1="1711" x2="1720" y1="${y}" y2="${y}" stroke="${LN}" stroke-width="1.5"/>`;
  g+=`<line x1="1711" x2="1715" y1="${y+27.7}" y2="${y+27.7}" stroke="${LN}" stroke-width="1.5"/>`;
});
g+=`<line x1="1711" x2="1715" y1="112.3" y2="112.3" stroke="${LN}" stroke-width="1.5"/>`;
[890,985,1081,1177].forEach(y=>g+=`<line x1="4" x2="1710" y1="${y}" y2="${y}" stroke="${DOT}" stroke-width="1.5" stroke-dasharray="2 6"/>`);
[794.5,890,985,1081,1177].forEach(y=>g+=`<line x1="1713" x2="1719" y1="${y}" y2="${y}" stroke="${LN}" stroke-width="1.5"/>`);
[844,940,1033,1129].forEach(y=>g+=`<line x1="1713" x2="1715" y1="${y}" y2="${y}" stroke="${LN}" stroke-width="1.5"/>`);
g+=`<line x1="1711" x2="1711" y1="67" y2="1306" stroke="${LN}" stroke-width="1.5"/>`;
g+=`<line x1="0" x2="1786" y1="764" y2="764" stroke="${LN}" stroke-width="1.5"/>`;
g+=`<rect x="1712.5" y="765.5" width="73" height="515" fill="none" stroke="#b00000" stroke-width="3"/>`;
g+=`<line x1="0" x2="1786" y1="1282.5" y2="1282.5" stroke="${LN}" stroke-width="2"/>`;
g+=`<line x1="0" x2="1786" y1="1305" y2="1305" stroke="${LN}" stroke-width="2"/>`;
g+=`<line x1="223" x2="223" y1="1283" y2="1305" stroke="${LN}"/><line x1="1196" x2="1196" y1="1283" y2="1305" stroke="${LN}"/>`;
[341,461,580,822,947,1071].forEach(x=>g+=`<line x1="${x}" x2="${x}" y1="1283" y2="1287" stroke="${LN}"/>`);
document.getElementById('grid').innerHTML=g;

const lx=z10(1165,0)[0],ly=a=>a/3+400;
let r=`<path d="M${lx} ${ly(803)}V${ly(845)}M${lx} ${ly(983)}V${ly(1000)}" stroke="${WK}" stroke-width="1.4"/><rect x="${lx-6.5}" y="${ly(845)}" width="13" height="${ly(983)-ly(845)}" fill="${CY}"/>`;
r+=`<path d="M1620 691H1625" stroke="#e8e8e8" stroke-width="1.5"/>`;
r+=`<path d="M1621 680H1625" stroke="#d8d800" stroke-width="1.5"/>`;
r+=`<path d="M1621 646L1624 648.5" stroke="#d000d0" stroke-width="1.6"/>`;
r+=`<path d="M1621 733V737L1623 735Z" fill="#b0b0b0" stroke="#b0b0b0"/>`;
// sub-chart spike line
r+=`<polyline points="8,1272.7 1365,1272.7 1388.5,793 1412,1272.7 1458,1272.7 1482,793 1507,1272.7 1625,1272.7" fill="none" stroke="#d8d8d8" stroke-width="2"/>`;
document.getElementById('rest').innerHTML=r;
</script>
</body>
</html>
